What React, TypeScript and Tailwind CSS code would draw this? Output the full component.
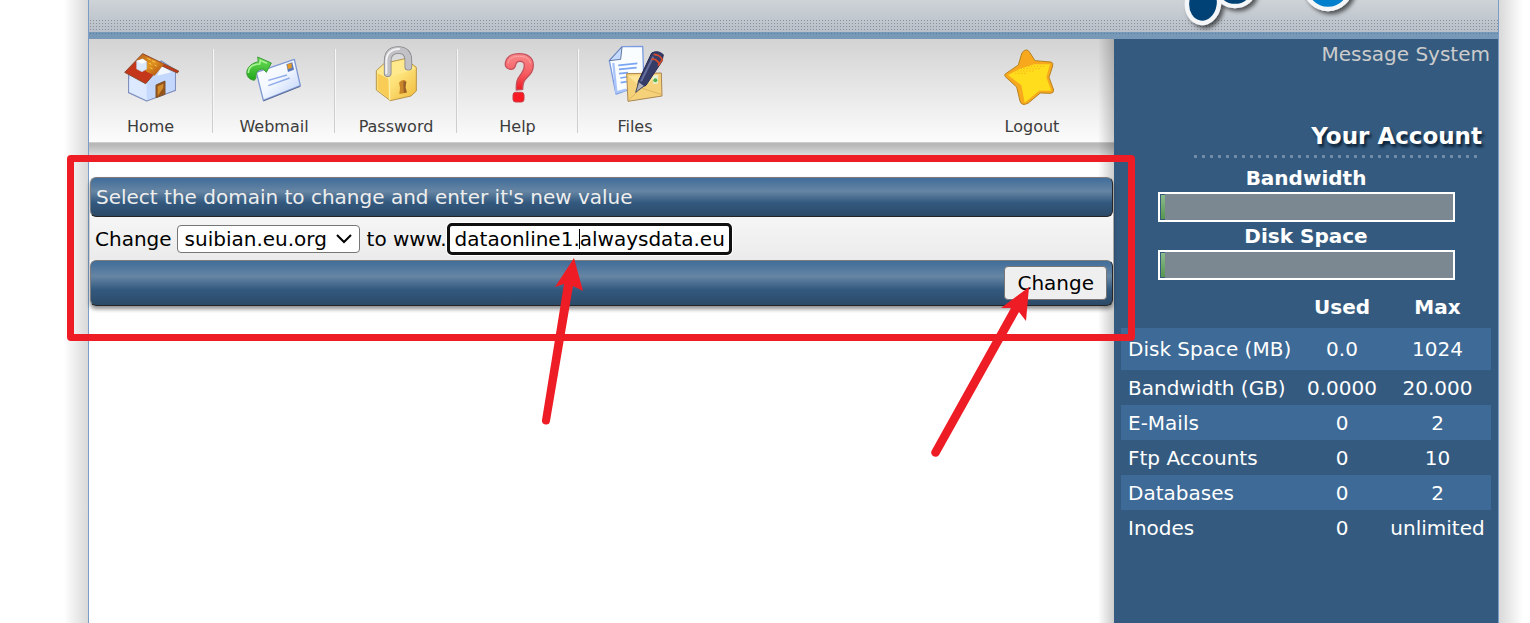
import React, { ReactNode } from "react";

const HomeIcon = () => (
  <svg viewBox="21 0 180 180" className="h-15 w-15" aria-hidden="true">
    <defs>
      <linearGradient id="roof" x1="0" y1="0" x2="1" y2="1">
        <stop offset="0" stopColor="#b5601c" />
        <stop offset=".5" stopColor="#e09420" />
        <stop offset="1" stopColor="#a8430f" />
      </linearGradient>
    </defs>
    <path d="M44 88 L44 143 L98 168 L184 136 L184 75 L142 48 L98 88 Z" fill="#d9e7ff" stroke="#7f90be" strokeWidth="4" strokeLinejoin="round" />
    <path d="M98 110 L142 52 L182 78 L182 134 L99 165 Z" fill="#c3d8fc" />
    <path d="M142 62 L172 82 L130 92 Z" fill="#f1f6ff" />
    <path d="M46 102 L94 118 L96 162 L46 141 Z" fill="#dce9ff" />
    <path d="M32 82 L86 26 L194 78 L190 84 L142 62 L95 116 Z" fill="#c5371a" stroke="#8b4a2b" strokeWidth="3" strokeLinejoin="round" />
    <path d="M66 48 L86 28 L150 58 L122 92 L98 80 Z" fill="url(#roof)" />
    <path d="M86 28 L190 78 L150 60 Z" fill="#a8531b" />
    <path d="M100 40 l10 5 M114 47 l10 5 M104 54 l8 4 M122 60 l6 3 M108 68 l8 4" stroke="#ffc547" strokeWidth="3" />
    <path d="M68 48 L86 42 L98 50 L98 72 L84 80 L68 72 Z" fill="#dceaff" stroke="#bccbe2" strokeWidth="2" />
    <path d="M68 48 L86 42 L98 50 L83 56 Z" fill="#fff" />
    <path d="M126 120 L153 108 L153 148 L126 158 Z" fill="#96531a" stroke="#7f5430" strokeWidth="3" />
    <path d="M131 124 L148 116 L148 128 L131 153 Z" fill="#d18a2c" />
  </svg>
);

const WebmailIcon = () => (
  <svg viewBox="39 0 180 180" className="h-15 w-15" aria-hidden="true">
    <defs>
      <linearGradient id="envelope" x1="0" y1="0" x2="1" y2="1">
        <stop offset="0" stopColor="#fff" />
        <stop offset=".5" stopColor="#f2f7ff" />
        <stop offset="1" stopColor="#b7cdf8" />
      </linearGradient>
      <linearGradient id="arrow-green" x1="0" y1="0" x2="0" y2="1">
        <stop offset="0" stopColor="#6ee05a" />
        <stop offset="1" stopColor="#1fa51a" />
      </linearGradient>
    </defs>
    <path d="M76 82 L190 43 L208 122 L97 166 Z" fill="url(#envelope)" stroke="#7f98d4" strokeWidth="4" strokeLinejoin="round" />
    <path d="M208 124 L97 168" stroke="#5b6b95" strokeWidth="3" />
    <path d="M112 106 L168 90 M112 122 L176 99" stroke="#8fabeb" strokeWidth="4" />
    <path d="M166 58 L184 52 L189 74 L171 81 Z" fill="#5b78b8" />
    <path d="M169 58 L182 55 L182 69 L170 72 Z" fill="#e89a22" />
    <path d="M70 106 C38 102 38 60 82 50 L80 36 L121 54 L106 82 L97 72 C80 73 73 83 75 99 Z" fill="url(#arrow-green)" stroke="#3e9b3a" strokeWidth="3" strokeLinejoin="round" />
    <path d="M52 84 C52 66 68 58 86 57 L88 46 L108 55" fill="none" stroke="#a6f391" strokeWidth="5" />
  </svg>
);

const LockIcon = () => (
  <svg viewBox="133 45 180 180" className="h-15 w-15" aria-hidden="true">
    <defs>
      <linearGradient id="gold" x1="0" y1="0" x2="1" y2="1">
        <stop offset="0" stopColor="#fff2a0" />
        <stop offset=".5" stopColor="#fde27a" />
        <stop offset="1" stopColor="#f0b838" />
      </linearGradient>
    </defs>
    <path d="M164 122 L188 100 L250 86 L284 112 L284 183 L268 198 L206 212 L164 180 Z" fill="url(#gold)" stroke="#b89448" strokeWidth="3" strokeLinejoin="round" />
    <path d="M166 124 L202 142 L282 116 L250 90 L190 104 Z" fill="#ffe98c" />
    <path d="M202 142 L204 209" stroke="#fff1a9" strokeWidth="4" />
    <path d="M168 130 L200 147 L202 206 L168 178 Z" fill="#f9cd55" />
    <path d="M198 130 V92 C198 68 212 60 230 60 C250 60 260 72 260 90 V110" fill="none" stroke="#87878b" strokeWidth="23" strokeLinecap="round" />
    <path d="M198 130 V92 C198 68 212 60 230 60 C250 60 260 72 260 90 V110" fill="none" stroke="#c2c2c6" strokeWidth="18" strokeLinecap="round" />
    <path d="M194 130 V92 C195 66 214 56 232 57" fill="none" stroke="#f3f3f5" strokeWidth="6" strokeLinecap="round" />
    <path d="M232 158 Q243 145 254 154 L252 172 L256 188 L233 192 L235 173 Z" fill="#c98528" />
    <path d="M245 154 L254 156 L251 172 L255 187 L246 188 Z" fill="#97602a" />
  </svg>
);

const HelpIcon = () => (
  <svg viewBox="504 45 180 180" className="h-15 w-15" aria-hidden="true">
    <defs>
      <linearGradient id="help-red" x1="0" y1="0" x2="0" y2="1">
        <stop offset="0" stopColor="#f98a8c" />
        <stop offset=".55" stopColor="#f65c61" />
        <stop offset="1" stopColor="#f01822" />
      </linearGradient>
    </defs>
    <path d="M556 105 C555 80 575 71 598 71 C624 71 640 84 640 105 C640 126 629 134 617 147 C608 157 609 164 608 178 L589 180 C588 163 588 151 598 139 C608 127 613 120 613 106 C613 96 606 93 597 94 C586 95 589 103 584 112 C579 122 558 119 556 105 Z" fill="url(#help-red)" stroke="#c4525c" strokeWidth="4" />
    <path d="M564 100 C567 84 580 79 599 79 C618 79 629 87 631 100" fill="none" stroke="#fca5a3" strokeWidth="3" />
    <rect x="579" y="187" width="33" height="29" rx="8" fill="#fa1822" stroke="#c8414a" strokeWidth="3" />
  </svg>
);

const FilesIcon = () => (
  <svg viewBox="15 15 180 180" className="h-15 w-15" aria-hidden="true">
    <path d="M28 62 L66 20 L128 19 L132 132 L48 162 Z" fill="#fafdff" stroke="#7b9ce0" strokeWidth="4" strokeLinejoin="round" />
    <path d="M28 62 L66 21 L62 58 Z" fill="#c6daff" stroke="#6079a6" strokeWidth="3" strokeLinejoin="round" />
    <path d="M40 69 L49 157 L78 149" fill="none" stroke="#a9c5fc" strokeWidth="7" />
    <path d="M55 76 L112 70 M57 88 L110 83 M57 101 L84 98 M61 114 L80 111 M62 128 L80 125" stroke="#7ba5f2" strokeWidth="5" />
    <path d="M80 101 L184 99 L186 168 L84 184 Z" fill="#f5d27a" stroke="#ac8751" strokeWidth="3" strokeLinejoin="round" />
    <path d="M84 107 L178 104 L126 145 Z" fill="#ffe49a" />
    <path d="M87 179 L124 144 L183 163" fill="none" stroke="#e0b560" strokeWidth="3" />
    <path d="M158 108 L173 105 L174 130 L160 132 Z" fill="#e5f3db" />
    <circle cx="166" cy="121" r="6" fill="#56b34a" />
    <path d="M112 148 L115 124 L155 39 Q174 29 190 44 L186 64 L138 136 Z" fill="#363c68" stroke="#272a4e" strokeWidth="3" strokeLinejoin="round" />
    <path d="M123 124 L160 50" stroke="#66709f" strokeWidth="6" />
    <path d="M154 58 Q170 55 179 74 M161 43 Q180 44 187 59 L174 77" fill="none" stroke="#d64d2c" strokeWidth="5" />
    <path d="M116 127 L107 157 L132 138" fill="#aeb1bb" stroke="#4a4d62" strokeWidth="3" />
  </svg>
);

const StarIcon = () => (
  <svg viewBox="66 135 180 180" className="h-15 w-15" aria-hidden="true">
    <path d="M126 158 Q140 142 149 157 L165 182 L213 186 Q221 188 218 198 L207 232 L221 270 Q221 280 211 280 L181 279 L145 309 Q125 320 120 303 L110 261 L76 230 Q70 223 80 219 L115 195 Z" fill="#f7a81c" stroke="#b68322" strokeWidth="3" strokeLinejoin="round" />
    <path d="M118 207 L162 193 L210 193 L199 232 L214 272 L178 272 L134 308 L124 256 L84 225 Z" fill="#ffdc1c" />
    <path d="M112 213 h50 M122 206 h62 M136 199 h60 M106 220 h34" stroke="#f3a51c" strokeWidth="3" strokeDasharray="3 6" />
  </svg>
);

const tools: { label: string; icon: ReactNode; cell: string }[] = [
  { label: "Home", icon: <HomeIcon />, cell: "w-[125px]" },
  { label: "Webmail", icon: <WebmailIcon />, cell: "w-[122px]" },
  { label: "Password", icon: <LockIcon />, cell: "w-[122px]" },
  { label: "Help", icon: <HelpIcon />, cell: "w-[121px]" },
  { label: "Files", icon: <FilesIcon />, cell: "w-28" },
];

const usage = [
  { name: "Disk Space (MB)", used: "0.0", max: "1024" },
  { name: "Bandwidth (GB)", used: "0.0000", max: "20.000" },
  { name: "E-Mails", used: "0", max: "2" },
  { name: "Ftp Accounts", used: "0", max: "10" },
  { name: "Databases", used: "0", max: "2" },
  { name: "Inodes", used: "0", max: "unlimited" },
];

function ToolLink({ label, icon }: { label: string; icon: ReactNode }) {
  return (
    <a href="#" className="flex flex-col items-center gap-3 text-base leading-5 text-[#3c3c3c]">
      {icon}
      {label}
    </a>
  );
}

function Header() {
  return (
    <header className="relative h-[39px] overflow-hidden bg-linear-to-b from-[#cdd3d7] to-[#b9c0c9] to-80%">
      <div className="flex h-full flex-col justify-end">
        <div className="h-[13px] bg-[radial-gradient(circle,#8b9098_1px,transparent_1px)] bg-size-[3px_3px]" />
        <div className="h-[7px] bg-[#7898b7]">
          <div className="h-[3px] bg-[radial-gradient(circle,#557fa6_1px,transparent_1px)] bg-size-[3px_3px]" />
        </div>
      </div>
      <svg viewBox="0 0 190 39" className="absolute top-0 right-[133px] h-[39px] w-[190px]" aria-hidden="true">
        <defs>
          <filter id="logo-shadow" x="-20%" y="-20%" width="150%" height="160%">
            <feDropShadow dx="3" dy="3" stdDeviation="2" floodColor="#000" floodOpacity=".6" />
          </filter>
        </defs>
        <g filter="url(#logo-shadow)" stroke="#f4f6f8" strokeWidth="4.5">
          <ellipse cx="60" cy="-9" rx="18" ry="15" fill="#004274" />
          <ellipse cx="28" cy="3" rx="16" ry="20" fill="#004274" transform="rotate(8 28 3)" />
          <circle cx="153" cy="-14" r="23" fill="#0080cc" />
        </g>
      </svg>
    </header>
  );
}

function Toolbar() {
  return (
    <nav className="flex h-[104px] items-start border-b border-[#ccc] bg-linear-to-b from-[#d3d3d3] to-[#fcfcfc] pt-1.5">
      {tools.map((t) => (
        <div key={t.label} className={`flex shrink-0 items-start ${t.cell}`}>
          <div className="flex-1">
            <ToolLink label={t.label} icon={t.icon} />
          </div>
          {t.label !== "Files" && (
            <div className="mt-1 h-[84px] w-0.5 border-l border-[#cecece] bg-[#f7f7f7]" />
          )}
        </div>
      ))}
      <div className="mr-5 ml-auto w-[124px]">
        <ToolLink label="Logout" icon={<StarIcon />} />
      </div>
    </nav>
  );
}

const barClass =
  "rounded-md border border-t-[#7d7d7d] border-r-[#252525] border-b-[#252525] border-l-[#7d7d7d] bg-[linear-gradient(#406d9a,#6685a3_35%,#33597f_65%,#2c4a67)]";

function Annotations() {
  return (
    <div className="pointer-events-none absolute top-0 -right-[21px] -left-[22px]" aria-hidden="true">
      <div className="mt-[116px] h-[186px] rounded-sm border-7 border-[#ee1c24]" />
      <svg viewBox="0 0 60 180" className="absolute top-[216px] left-[469px] h-[180px] w-[60px]" fill="#ee1c24">
        <path d="M38 3 L47 36 L37 31 L14 166 A4 4 0 0 1 6 165 L28 29 L19 32 Z" />
      </svg>
      <svg viewBox="0 0 120 190" className="absolute top-[236px] right-[94px] h-[190px] w-[120px]" fill="#ee1c24">
        <path d="M108 12 L105 46 L98 37 L18 180 A4 4 0 0 1 11 175 L90 33 L80 33 Z" />
      </svg>
    </div>
  );
}

function DomainForm() {
  return (
    <form className="mt-3.5 mr-px ml-px rounded-md bg-white shadow-[0_3px_4px_rgba(0,0,0,0.45)]" onSubmit={(e) => e.preventDefault()}>
      <h1 className={`flex h-10 items-center px-[5px] text-[#eee] ${barClass}`}>
        Select the domain to change and enter it's new value
      </h1>
      <div className="flex h-[43px] items-center bg-linear-to-b from-[#f6f6f6] to-[#ebebeb] pl-[5px]">
        <label htmlFor="domain">Change</label>
        <span className="relative ml-[5px] flex items-center">
          <select
            id="domain"
            className="h-7 w-[183px] appearance-none rounded-sm border border-[#767676] bg-white pl-[7px] leading-6"
          >
            <option>suibian.eu.org</option>
          </select>
          <svg viewBox="0 0 16 10" className="pointer-events-none absolute right-2 h-2.5 w-4" fill="none" stroke="#000" strokeWidth="2" aria-hidden="true">
            <path d="M1 1 L8 8 L15 1" />
          </svg>
        </span>
        <label htmlFor="target" className="ml-[7px]">to www.</label>
        <span className="relative flex">
          <input
            id="target"
            type="text"
            defaultValue="dataonline1.alwaysdata.eu.org"
            className="h-8 w-[285px] rounded-[5px] border-3 border-[#101010] bg-white px-[5px] shadow-[0_0_0_1px_#fff] outline-none"
          />
          <span className="absolute top-1.5 left-[132px] h-5 w-px bg-black" />
        </span>
      </div>
      <div className={`flex h-[46px] items-center justify-end pr-[5px] ${barClass}`}>
        <button type="submit" className="h-[34px] rounded-sm border border-[#767676] bg-[#efefef] px-3">
          Change
        </button>
      </div>
    </form>
  );
}

function Meter({ label }: { label: string }) {
  return (
    <div className="flex h-[58px] flex-col items-center">
      <h3 className="h-7 leading-7 font-bold">{label}</h3>
      <div className="h-[30px] w-[297px] border-2 border-white bg-[#7b8791]" role="meter" aria-label={label} aria-valuenow={0}>
        <div className="h-full w-[5px] border border-r-0 border-[#345b7e] bg-linear-to-b from-[#8dbb8c] to-[#55964f]" />
      </div>
    </div>
  );
}

function Sidebar() {
  return (
    <aside className="w-96 shrink-0 bg-[#345b7f] px-[7px] text-white">
      <a href="#" className="block pt-px pr-px text-right leading-7 text-[#ccc]">Message System</a>
      <div className="mt-[52px] mr-[9px] ml-[73px] flex flex-col gap-[3px]">
        <h2 className="text-right text-[23px] leading-8 font-bold [text-shadow:2px_3px_3px_#0b2036]">Your Account</h2>
        <div className="h-[3px] bg-[repeating-linear-gradient(90deg,#7089a5_0,#7089a5_3px,transparent_3px,transparent_8px)]" />
      </div>
      <div className="mt-1.5">
        <Meter label="Bandwidth" />
        <Meter label="Disk Space" />
      </div>
      <table className="mt-1.5 w-full table-fixed">
        <colgroup>
          <col />
          <col className="w-[84px]" />
          <col className="w-[107px]" />
        </colgroup>
        <thead>
          <tr className="h-[42px]">
            <td />
            <th scope="col">Used</th>
            <th scope="col">Max</th>
          </tr>
        </thead>
        <tbody>
          {usage.map((row) => (
            <tr key={row.name} className="h-[35px] first:h-[42px] odd:bg-[#3d6a96]">
              <th scope="row" className="pl-[7px] text-left font-normal whitespace-nowrap">{row.name}</th>
              <td className="text-center">{row.used}</td>
              <td className="text-center">{row.max}</td>
            </tr>
          ))}
        </tbody>
      </table>
    </aside>
  );
}

export default function App() {
  return (
    <div className="flex min-h-screen bg-white pr-[7px] pl-16 font-['DejaVu_Sans',Verdana,sans-serif] text-xl leading-6 text-black">
      <div className="w-6 shrink-0 bg-linear-to-r from-white to-[#d9d9d9]" />
      <div className="flex min-w-0 flex-1 flex-col border-x border-[#7a9cc6]">
        <Header />
        <div className="flex flex-1">
          <main className="relative min-w-0 flex-1">
            <Toolbar />
            <div className="h-5 bg-linear-to-b from-[#b8b8b8] from-10% via-[#dcdcdc] via-60% to-white" />
            <div className="pointer-events-none absolute inset-y-0 right-0 w-4 bg-linear-to-r from-transparent to-black/20" />
            <div className="relative">
              <DomainForm />
            </div>
            <Annotations />
          </main>
          <Sidebar />
        </div>
      </div>
      <div className="w-6 shrink-0 bg-linear-to-r from-[#d9d9d9] to-white" />
    </div>
  );
}
